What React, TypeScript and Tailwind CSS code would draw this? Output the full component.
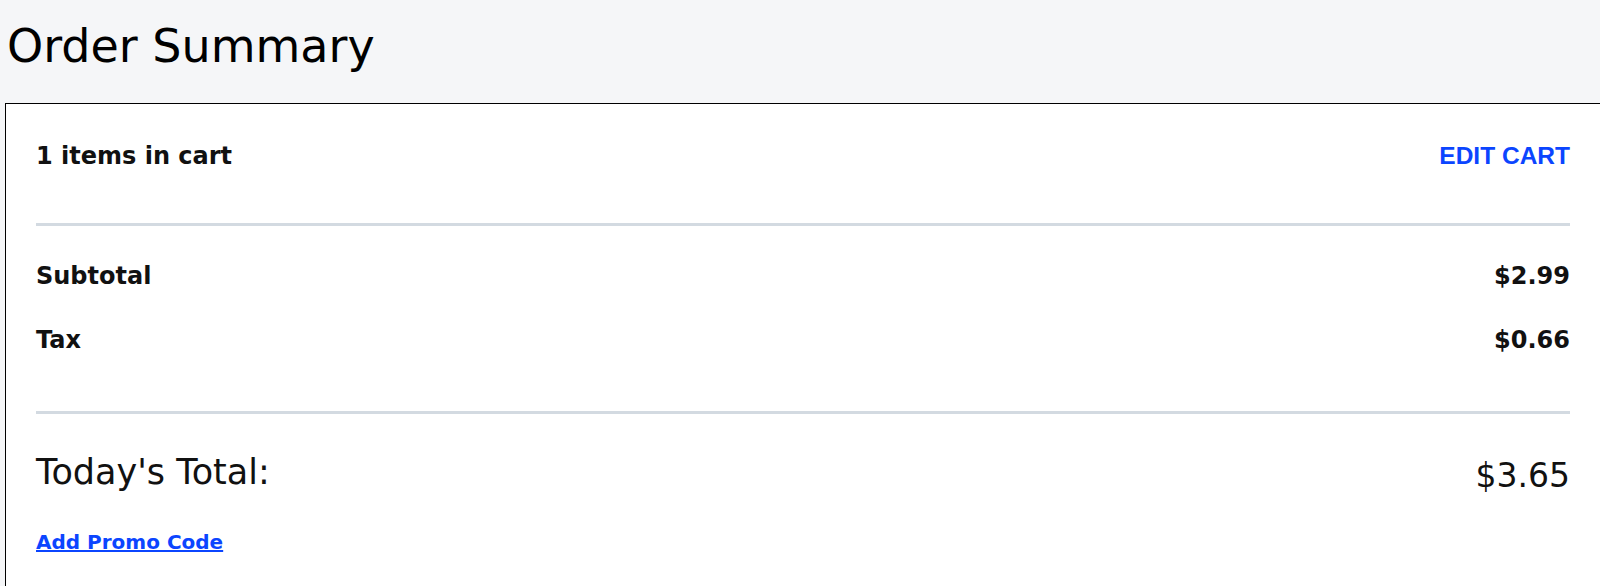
export default function App() {
  const font = { fontFamily: '"DejaVu Sans", "Noto Sans", sans-serif' };
  return (
    <div className="w-[1600px] h-[586px] overflow-hidden bg-[#f5f6f8] text-[#111111]" style={font}>
      <h1 className="h-[103px] pl-[7px] pt-[18px] text-[46px] leading-[56px] font-normal text-black">
        Order Summary
      </h1>

      <div className="ml-[5px] w-[1596px] border border-black bg-white px-[30px] pb-[80px]">
        <div className="flex justify-between items-start pt-[38px] h-[119px]">
          <span className="text-[24px] leading-[28px] font-bold">1 items in cart</span>
          <button
            className="text-[24.5px] leading-[28px] font-bold text-[#0b45ff]"
            style={{ fontFamily: '"Liberation Sans", Arial, sans-serif' }}
          >
            EDIT CART
          </button>
        </div>

        <div className="h-[3px] bg-[#d3dae1]" />

        <div className="pt-[36px] pb-[57px] flex flex-col gap-[36px]">
          <div className="flex justify-between text-[24px] leading-[28px] font-bold">
            <span>Subtotal</span>
            <span>$2.99</span>
          </div>
          <div className="flex justify-between text-[24px] leading-[28px] font-bold">
            <span>Tax</span>
            <span>$0.66</span>
          </div>
        </div>

        <div className="h-[3px] bg-[#d3dae1]" />

        <div className="flex justify-between items-start pt-[38px] leading-[40px]">
          <span className="text-[35px]">Today's Total:</span>
          <span className="pt-[4px] text-[33px]">$3.65</span>
        </div>

        <div className="pt-[34px]">
          <a href="#" className="text-[20px] leading-[24px] font-bold text-[#0b45ff] underline">
            Add Promo Code
          </a>
        </div>
      </div>
    </div>
  );
}
